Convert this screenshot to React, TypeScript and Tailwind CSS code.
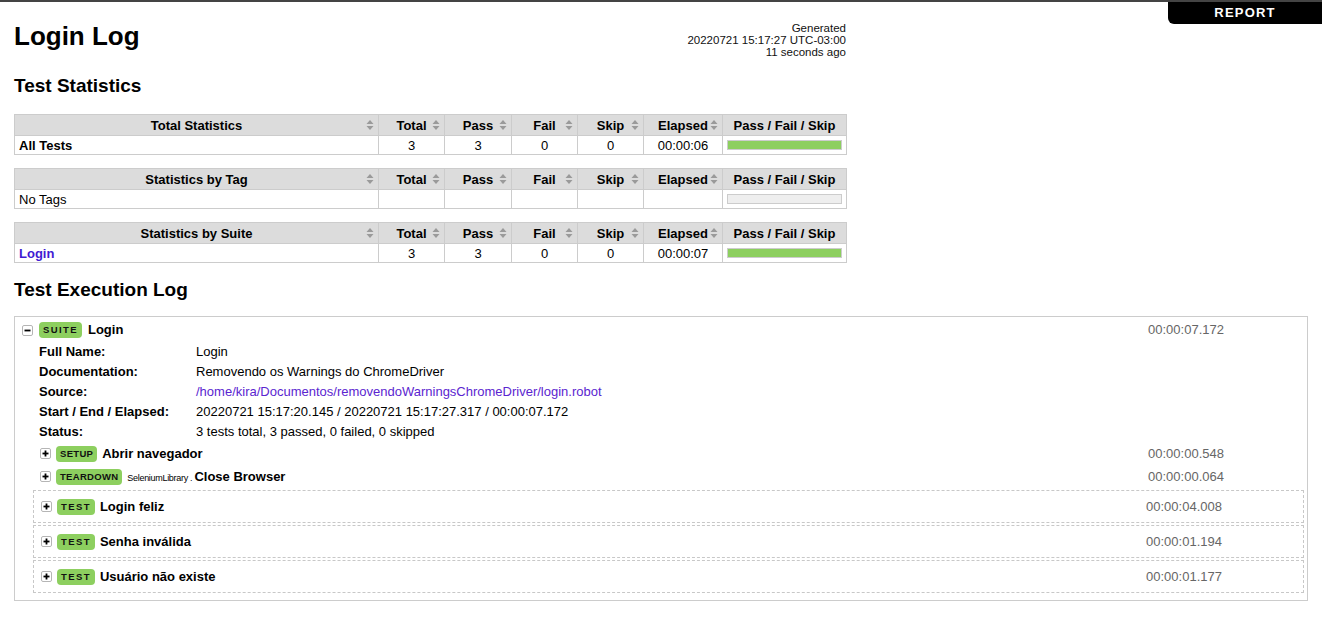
import type { ReactNode } from "react";

/* ------------------------------------------------------------------ */
/*  Data                                                               */
/* ------------------------------------------------------------------ */

type StatRow = {
  name: string;
  kind: "bold" | "plain" | "link";
  total?: number;
  pass?: number;
  fail?: number;
  skip?: number;
  elapsed?: string;
  bar: "pass" | "empty";
};

const statTables: { title: string; row: StatRow }[] = [
  {
    title: "Total Statistics",
    row: { name: "All Tests", kind: "bold", total: 3, pass: 3, fail: 0, skip: 0, elapsed: "00:00:06", bar: "pass" },
  },
  {
    title: "Statistics by Tag",
    row: { name: "No Tags", kind: "plain", bar: "empty" },
  },
  {
    title: "Statistics by Suite",
    row: { name: "Login", kind: "link", total: 3, pass: 3, fail: 0, skip: 0, elapsed: "00:00:07", bar: "pass" },
  },
];

const metadata: { label: string; value: ReactNode }[] = [
  { label: "Full Name:", value: "Login" },
  { label: "Documentation:", value: "Removendo os Warnings do ChromeDriver" },
  {
    label: "Source:",
    value: (
      <a href="#" className="text-[#5b25d0]">
        /home/kira/Documentos/removendoWarningsChromeDriver/login.robot
      </a>
    ),
  },
  { label: "Start / End / Elapsed:", value: "20220721 15:17:20.145 / 20220721 15:17:27.317 / 00:00:07.172" },
  { label: "Status:", value: "3 tests total, 3 passed, 0 failed, 0 skipped" },
];

const tests = [
  { name: "Login feliz", elapsed: "00:00:04.008" },
  { name: "Senha inválida", elapsed: "00:00:01.194" },
  { name: "Usuário não existe", elapsed: "00:00:01.177" },
];

/* ------------------------------------------------------------------ */
/*  Icons                                                              */
/* ------------------------------------------------------------------ */

function SortIcon() {
  return (
    <svg
      width="8"
      height="11"
      viewBox="0 0 8 11"
      className="absolute right-[4px] top-1/2 -translate-y-1/2"
    >
      <path d="M4 0.5L7.5 4.5H0.5z" fill="#9a9a9a" />
      <path d="M4 10.5L7.5 6.5H0.5z" fill="#9a9a9a" />
    </svg>
  );
}

function Toggle({ open }: { open?: boolean }) {
  return (
    <svg width="11" height="11" viewBox="0 0 11 11" className="shrink-0">
      <rect x="0.5" y="0.5" width="10" height="10" rx="1.5" fill="#fff" stroke="#b5b5b5" />
      <line x1="2.5" y1="5.5" x2="8.5" y2="5.5" stroke="#000" strokeWidth="1.8" />
      {!open && <line x1="5.5" y1="2.5" x2="5.5" y2="8.5" stroke="#000" strokeWidth="1.8" />}
    </svg>
  );
}

/* ------------------------------------------------------------------ */
/*  Pieces                                                             */
/* ------------------------------------------------------------------ */

function Label({ text, wide }: { text: string; wide?: boolean }) {
  return (
    <span
      className={`flex h-[16px] shrink-0 items-center rounded-[4px] bg-[#8dcf5f] px-[4px] text-[9.5px] font-bold leading-none text-[#111] ${
        wide ? "tracking-[1.4px]" : "tracking-[0.3px]"
      }`}
    >
      {text}
    </span>
  );
}

function Elapsed({ value }: { value: string }) {
  return <span className="mr-[43px] w-[150px] shrink-0 text-center text-[#666]">{value}</span>;
}

function StatsTable({ title, row }: { title: string; row: StatRow }) {
  const heads = ["Total", "Pass", "Fail", "Skip", "Elapsed"];
  const cells = [row.total, row.pass, row.fail, row.skip, row.elapsed];
  return (
    <table className="w-[832px] table-fixed border-collapse leading-[15px]">
      <colgroup>
        <col className="w-[364px]" />
        <col className="w-[66px]" />
        <col className="w-[67px]" />
        <col className="w-[66px]" />
        <col className="w-[66px]" />
        <col className="w-[79px]" />
        <col className="w-[124px]" />
      </colgroup>
      <thead>
        <tr className="h-[21px] bg-[#dcdcdc]">
          <th className="relative border border-[#ccc] p-0 font-bold">
            {title}
            <SortIcon />
          </th>
          {heads.map((h) => (
            <th key={h} className="relative border border-[#ccc] p-0 font-bold">
              {h}
              <SortIcon />
            </th>
          ))}
          <th className="border border-[#ccc] p-0 font-bold">Pass / Fail / Skip</th>
        </tr>
      </thead>
      <tbody>
        <tr className="h-[19px]">
          <td className="border border-[#ccc] p-0 pl-[4px]">
            {row.kind === "link" ? (
              <a href="#" className="font-bold text-[#3f1ad2]">
                {row.name}
              </a>
            ) : (
              <span className={row.kind === "bold" ? "font-bold" : ""}>{row.name}</span>
            )}
          </td>
          {cells.map((c, i) => (
            <td key={i} className="border border-[#ccc] p-0 text-center">
              {c}
            </td>
          ))}
          <td className="border border-[#ccc] px-[4px] py-0">
            <div
              className={`h-[10px] border border-[#ccc] ${
                row.bar === "pass" ? "bg-[#8dcf5f]" : "bg-[#eee]"
              }`}
            />
          </td>
        </tr>
      </tbody>
    </table>
  );
}

/* ------------------------------------------------------------------ */
/*  Page                                                               */
/* ------------------------------------------------------------------ */

export default function App() {
  return (
    <div className="relative min-h-screen border-t-2 border-[#444] bg-white font-['Liberation_Sans',Arial,sans-serif] text-[13px] text-black">
      {/* Report tab */}
      <a
        href="#"
        className="absolute right-0 top-0 flex h-[22px] w-[154px] items-center justify-center rounded-bl-[6px] bg-black text-[13px] font-bold tracking-[1.2px] text-white"
      >
        REPORT
      </a>

      <div className="px-[14px]">
        {/* Header */}
        <div className="flex w-[832px] items-start justify-between">
          <h1 className="mt-[19px] text-[26px] font-bold leading-[30px]">Login Log</h1>
          <div className="mt-[20px] text-right text-[11.5px] leading-[12px] text-[#111]">
            <div>Generated</div>
            <div>20220721 15:17:27 UTC-03:00</div>
            <div>11 seconds ago</div>
          </div>
        </div>

        {/* Statistics */}
        <h2 className="mt-[17px] text-[19px] font-bold leading-[22px]">Test Statistics</h2>
        <div className="mt-[17px] flex flex-col gap-[13px]">
          {statTables.map((t) => (
            <StatsTable key={t.title} title={t.title} row={t.row} />
          ))}
        </div>

        {/* Execution log */}
        <h2 className="mt-[16px] text-[19px] font-bold leading-[22px]">Test Execution Log</h2>
        <div className="mt-[15px] border border-[#ccc] pb-[7px] pr-[3px]">
          {/* Suite header */}
          <div className="mt-[3px] flex h-[20px] items-center justify-between pl-[7px]">
            <div className="flex items-center gap-[6px]">
              <Toggle open />
              <Label text="SUITE" wide />
              <span className="font-bold">Login</span>
            </div>
            <Elapsed value="00:00:07.172" />
          </div>

          {/* Metadata */}
          <div className="ml-[24px] mt-[2px]">
            {metadata.map((m) => (
              <div key={m.label} className="flex h-[20px] items-center">
                <span className="w-[157px] shrink-0 font-bold">{m.label}</span>
                <span>{m.value}</span>
              </div>
            ))}
          </div>

          {/* Setup / teardown */}
          <div className="ml-[25px]">
            <div className="flex h-[23px] items-center justify-between">
              <div className="flex items-center gap-[5px]">
                <Toggle />
                <Label text="SETUP" />
                <span className="font-bold">Abrir navegador</span>
              </div>
              <Elapsed value="00:00:00.548" />
            </div>
            <div className="flex h-[23px] items-center justify-between">
              <div className="flex items-center gap-[5px]">
                <Toggle />
                <Label text="TEARDOWN" />
                <span className="flex items-baseline">
                  <span className="text-[9px] tracking-[-0.3px]">SeleniumLibrary</span>
                  <span className="mx-[2px] text-[9px]">.</span>
                  <span className="font-bold">Close Browser</span>
                </span>
              </div>
              <Elapsed value="00:00:00.064" />
            </div>
          </div>

          {/* Tests */}
          <div className="ml-[18px] mt-[2px] flex flex-col gap-[2px]">
            {tests.map((t) => (
              <div
                key={t.name}
                className="flex h-[33px] items-center justify-between border border-dashed border-[#c8c8c8] pl-[7px]"
              >
                <div className="flex items-center gap-[5px]">
                  <Toggle />
                  <Label text="TEST" wide />
                  <span className="font-bold">{t.name}</span>
                </div>
                <span className="mr-[44px] w-[150px] shrink-0 text-center text-[#666]">{t.elapsed}</span>
              </div>
            ))}
          </div>
        </div>
      </div>
    </div>
  );
}
